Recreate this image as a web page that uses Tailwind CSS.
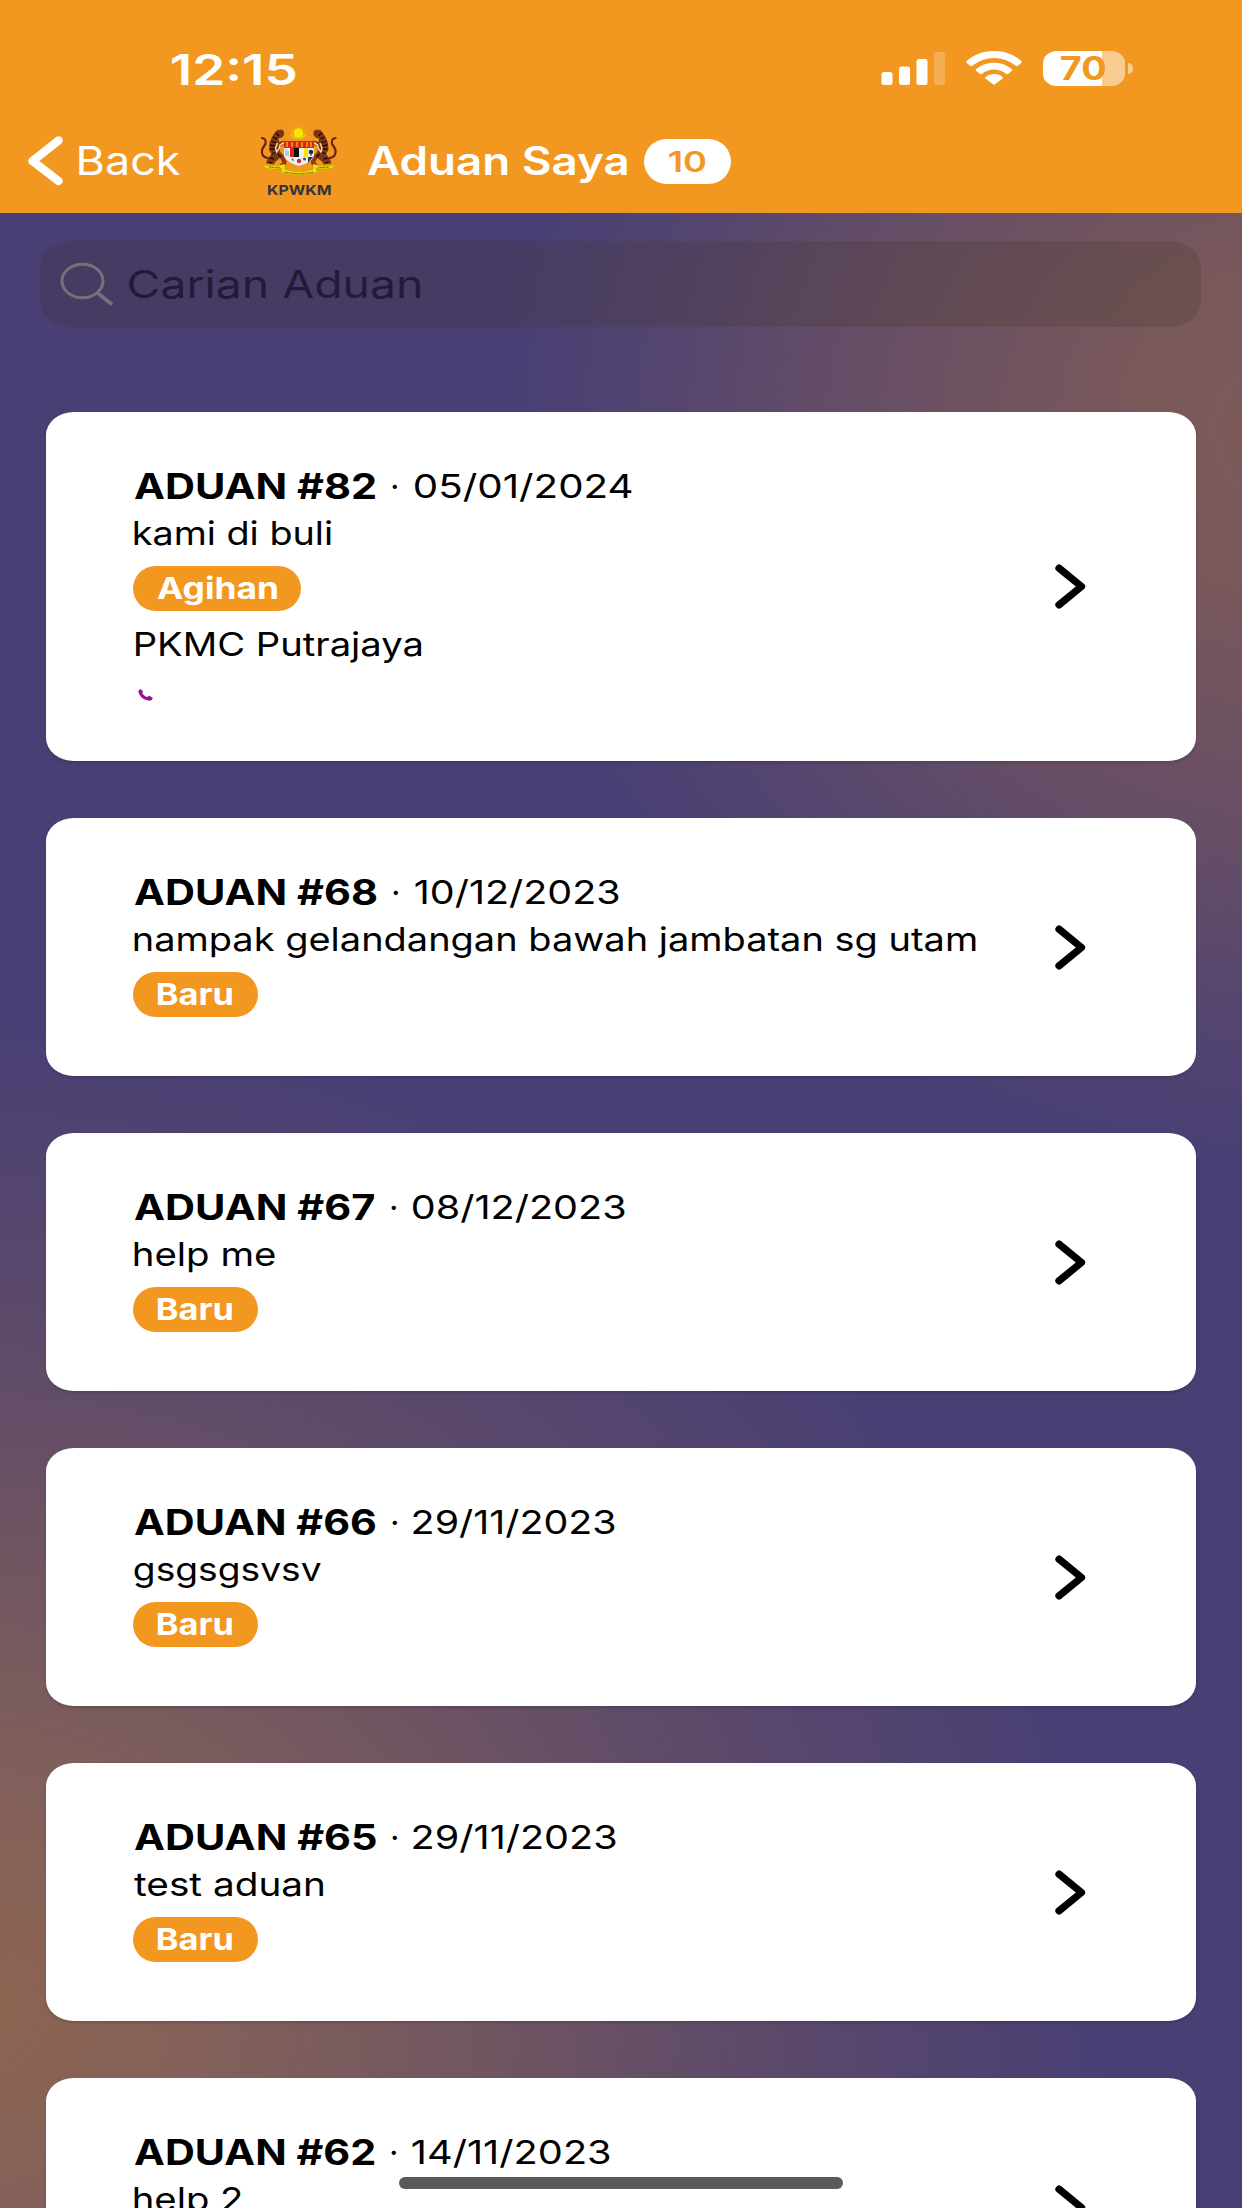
<!DOCTYPE html>
<html lang="ms">
<head>
<meta charset="utf-8">
<title>Aduan Saya</title>
<script src="https://cdn.jsdelivr.net/npm/@tailwindcss/browser@4"></script>
</head>
<body class="w-[1242px] h-[2208px] overflow-hidden relative bg-[#493f75] font-['Inter',sans-serif] text-black">
<div class="w-full h-full overflow-hidden flex flex-col bg-[radial-gradient(ellipse_800px_740px_at_1300px_430px,#7f5b59_0%,#79585b_22%,#644d66_58%,#544570_80%,#493f7500_100%),radial-gradient(ellipse_1150px_1000px_at_-30px_2010px,#8f6450_0%,#82605a_22%,#735760_42%,#5d4a6a_68%,#524470_84%,#493f7500_100%)]">

  <header class="h-[213px] shrink-0 bg-[#f29820] text-white">
    <!-- status bar -->
    <div class="h-[115px] flex items-start">
      <div class="pl-[171px] pt-[40px] w-[881px] h-full text-[42px] leading-[60px] font-semibold"><span class="fit" data-font="600 42px" data-w="125">12:15</span></div>
      <svg class="mt-[51px] w-[65px] h-[35px] shrink-0" viewBox="0 0 65 35" fill="#fff">
        <rect x="0.5" y="21" width="11" height="13" rx="2.5"/><rect x="18" y="15.500" width="11" height="18.500" rx="2.500"/>
        <rect x="35.500" y="8" width="11" height="26" rx="2.500"/><rect x="53" y="1" width="11" height="33" rx="2.500" opacity=".22"/>
      </svg>
      <svg class="ml-[20px] mt-[51px] w-[56px] h-[34px] shrink-0" viewBox="0 0 56 34" fill="#fff">
        <path d="M28 0C39 0 49 4 55.500 10.200Q56.200 11 55.500 11.700L51.500 15Q50.700 15.600 49.800 14.800Q40 7 28 7T6.200 14.800Q5.300 15.600 4.500 15L.500 11.700Q-.2 11 .5 10.200C7 4 17 0 28 0Z"/>
        <path d="M28 11.700C35 11.700 41.500 14.300 46 18.300Q46.800 19.100 46 19.800L42 23Q41.200 23.700 40.300 23Q35 18.500 28 18.500T15.700 23Q14.800 23.700 14 23L10 19.800Q9.200 19.100 10 18.300C14.500 14.300 21 11.700 28 11.700Z"/>
        <path d="M28 23C31.500 23 34.500 24.300 36.500 26Q37.300 26.700 36.500 27.400L29 33.300Q28 34 27 33.300L19.500 27.400Q18.700 26.700 19.500 26C21.500 24.300 24.500 23 28 23Z"/>
      </svg>
      <div class="ml-[21px] mt-[51px] w-[82px] h-[35px] shrink-0 rounded-[14px/12px] bg-[linear-gradient(90deg,#fff_0_58.500px,#f9cd91_58.500px)] pl-[18px] text-[#f29820] text-[32px] leading-[35px] font-bold"><span class="fit" data-font="700 32px" data-w="45">70</span></div>
      <div class="ml-[3px] mt-[63px] w-[5px] h-[11px] shrink-0 rounded-r-full bg-[#f9cd91]"></div>
    </div>
    <!-- navigation bar -->
    <div class="h-[98px] flex items-start">
      <svg class="ml-[27px] mt-[20px] w-[38px] h-[52px] shrink-0" viewBox="0 0 38 52" fill="none" stroke="#fff" stroke-width="8.500" stroke-linecap="round" stroke-linejoin="round"><path d="M31.500 5.500L5.500 26L31.500 46"/></svg>
      <div class="ml-[14px] mt-[16px] w-[181px] shrink-0 text-[39px] leading-[60px] font-normal"><span class="fit" data-font="400 39px" data-w="101">Back</span></div>
      <div class="w-[78px] mt-[10px] shrink-0 flex flex-col items-center">
        <svg class="w-[78px] h-[53px]" viewBox="0 0 78 53">
          <!-- star -->
          <circle cx="38.500" cy="8" r="4.800" fill="#fbe600"/><circle cx="38.500" cy="8" r="6.600" fill="none" stroke="#d6c400" stroke-width="1.400" stroke-dasharray="1.500 1.200"/>
          <path d="M31 10Q38 16 46 10" fill="none" stroke="#e7d320" stroke-width="1.500"/>
          <!-- tigers -->
          <g id="tiger">
            <path d="M24 6.500L21.500 4.500L17 5L14.500 8L12 12L9.500 18L9 25L11.500 29L7.500 34L6 38.500L14 39.500L15 37L20 33L22.500 37L19.500 40H26L26.500 36L24 31L20 26.500L20 22L25 18.500L24.500 15.500L19 17L18.500 13.500L22 12.500L24 10Z" fill="#7c3712"/>
            <path d="M8 33Q1 32 2 25Q3.500 21.500 5.500 19Q6.500 13.500 2 13" fill="none" stroke="#6b2110" stroke-width="2.200" stroke-linecap="round"/>
            <path d="M13 12L17 14M11 16L16 18M10 20L15 21M10 24L15 24M12 29L16 27M10 33L14 34M18 29L21 32M16 8L19 11M9 37L12 38" stroke="#190a08" stroke-width="1.300"/>
            <path d="M17.500 18L15.500 23L16.500 27L19 24L20 20L24 17.500" fill="none" stroke="#f4dc9e" stroke-width="1.500"/>
            <path d="M22 32L25 35.500L23 39" stroke="#d32a18" stroke-width="1.200" fill="none"/>
          </g>
          <use href="#tiger" transform="translate(77.500 0) scale(-1 1)"/>
          <!-- shield -->
          <path d="M24 16H54V31Q52 37 39 41Q26 37 24 31Z" fill="#eef0ee"/>
          <path d="M24 16H54V23H24Z" fill="#df2417"/>
          <path d="M27 17V22M32 17V22M37 17V22M42 17V22M47 17V22M51 17V22" stroke="#f7c81c" stroke-width="1.200"/>
          <path d="M30 23h4v9h-4z" fill="#e2261b"/><path d="M34 23h5v9h-5z" fill="#111"/><path d="M44 23h4v9h-4z" fill="#f8e40c"/>
          <path d="M26 24V31M28 26V31" stroke="#7cb4d8" stroke-width="1.200"/>
          <circle cx="51" cy="27" r="2.300" fill="#153a3a"/><path d="M51 27V31" stroke="#153a3a"/>
          <path d="M48 32H53L48 38Z" fill="#173c78"/><path d="M31 35l2-2l1 3z" fill="#2485b8"/><circle cx="39" cy="36" r="2.200" fill="#c82d3d"/><circle cx="44.500" cy="34" r="1.500" fill="#284ba0"/>
          <!-- motto ribbon -->
          <path d="M2 39.500Q12 43 25 39V44.500Q39 49 53 44.500V39Q66 43 76 39.500L72 43Q65 45 56 43L57 47.500Q39 52 21 47.500L22 43Q12 45 6 43Z" fill="#f3e209" stroke="#a99a0b" stroke-width=".4"/>
          <path d="M9 42Q15 43 20 42M58 42Q63 43 69 42M24 47Q39 50 54 47" fill="none" stroke="#554f0b" stroke-width="1" stroke-dasharray="1.500 .8"/>
        </svg>
        <div class="mt-[3px] text-[13.500px] leading-[18px] font-bold text-[#363338]"><span class="fit" data-font="700 13.5px" data-w="64">KPWKM</span></div>
      </div>
      <div class="ml-[29px] mt-[16px] shrink-0 text-[39px] leading-[60px] font-semibold"><span class="fit" data-font="600 39px" data-w="260">Aduan Saya</span></div>
      <div class="ml-[17px] mt-[24px] w-[87px] h-[45px] shrink-0 rounded-full bg-white pl-[25px] text-[28.500px] leading-[45px] font-semibold text-[#f29820]"><span class="fit" data-font="600 28.5px" data-w="37">10</span></div>
    </div>
  </header>

  <main class="flex flex-col">
    <div class="mt-[28px] ml-[40px] w-[1161px] h-[86px] rounded-[32px/26px] bg-[#3b3020]/20 flex">
      <svg class="ml-[20px] mt-[21px] w-[54px] h-[46px] shrink-0" viewBox="0 0 54 46" fill="none" stroke="#767078" stroke-width="3"><ellipse cx="22.500" cy="19" rx="20.500" ry="16.700"/><path d="M37 30.500L52 42.500" stroke-width="3.600"/></svg>
      <div class="ml-[15px] text-[38.500px] leading-[87px] text-[#221b38]"><span class="fit" data-font="400 38.5px" data-w="291">Carian Aduan</span></div>
    </div>
    <div id="list" class="mt-[85px] ml-[46px] w-[1150px] flex flex-col gap-[57px]"></div>
  </main>
</div>

<div class="absolute left-[399px] top-[2177px] w-[444px] h-[12px] rounded-full bg-[#5a5a5a]"></div>

<script>
  const items = [
    { no: 82, nw: 242, date: '05/01/2024', dw: 218, dg: 21, text: 'kami di buli', tw: 198, tag: 'Agihan', gw: 120, office: 'PKMC Putrajaya', ow: 286 },
    { no: 68, nw: 243, date: '10/12/2023', dw: 204, dg: 21, text: 'nampak gelandangan bawah jambatan sg utam', tw: 842, tag: 'Baru', gw: 75 },
    { no: 67, nw: 241, date: '08/12/2023', dw: 213, dg: 20, text: 'help me', tw: 141, tag: 'Baru', gw: 75 },
    { no: 66, nw: 242, date: '29/11/2023', dw: 202, dg: 20, text: 'gsgsgsvsv', tw: 187, tag: 'Baru', gw: 75 },
    { no: 65, nw: 242, date: '29/11/2023', dw: 203, dg: 20, text: 'test aduan', tw: 189, tag: 'Baru', gw: 75 },
    { no: 62, nw: 241, date: '14/11/2023', dw: 198, dg: 20, text: 'help 2', tw: 107, tag: 'Baru', gw: 75 },
  ];
  document.getElementById('list').innerHTML = items.map(i => `
    <article class="${i.office ? 'h-[348.500px]' : 'h-[258px]'} shrink-0 rounded-[28px/23px] bg-white shadow-[0_2px_3px_rgba(0,0,0,0.15)] flex items-center">
      <div class="pl-[88px] pt-[51px] w-[1008px] self-start">
        <div class="flex h-[47px] leading-[46px] text-[33px]">
          <span class="fit text-[35px] font-bold" data-font="700 35px" data-w="${i.nw}">ADUAN #${i.no}</span>
          <span class="fit ml-[16px]" data-font="400 33px" data-w="5">·</span>
          <span class="fit" style="margin-left:${i.dg - 4}px" data-font="400 33px" data-w="${i.dw}">${i.date}</span>
        </div>
        <div class="leading-[46px] text-[33px]"><span class="fit" data-font="400 33px" data-w="${i.tw}">${i.text}</span></div>
        <div class="mt-[10px] -ml-px h-[45px] ${i.office ? 'w-[168px]' : 'w-[125px]'} rounded-full bg-[#f29820] text-white text-[30px] leading-[45px] font-bold pl-[24px]"><span class="fit" data-font="700 30px" data-w="${i.gw}">${i.tag}</span></div>
        ${i.office ? `<div class="mt-[10px] leading-[46px] text-[33px]"><span class="fit ml-px" data-font="400 33px" data-w="${i.ow}">${i.office}</span></div>
        <svg class="mt-[22px] ml-[4px] w-[15px] h-[12px]" viewBox="0 0 15 12"><path d="M.3 2.500Q.8.300 3 .3L5 2.500L4.300 4.400Q6.500 7 9 7.900L11.300 6.800L14.700 8.800Q14.500 11.500 11.500 11.700Q2 10.500.3 2.500Z" fill="#9c0f8f"/></svg>` : ''}
      </div>
      <svg class="w-[34px] h-[46px] shrink-0" viewBox="0 0 34 46" fill="none" stroke="#000" stroke-width="7.300" stroke-linecap="round" stroke-linejoin="round"><path d="M5 5.200L27.500 23.500L5 41.800"/></svg>
    </article>`).join('');

  // Widen each label so that its ink spans the width given in data-w.
  const ctx = document.createElement('canvas').getContext('2d');
  document.querySelectorAll('.fit').forEach(el => {
    ctx.font = `${el.dataset.font} Inter, sans-serif`;
    const m = ctx.measureText(el.textContent);
    const w = +el.dataset.w;
    const s = w / (m.actualBoundingBoxLeft + m.actualBoundingBoxRight);
    Object.assign(el.style, {
      display: 'inline-block', whiteSpace: 'nowrap', flexShrink: 0, width: w + 'px', verticalAlign: 'top',
      transformOrigin: 'left', transform: `translateX(${m.actualBoundingBoxLeft * s}px) scaleX(${s})`
    });
  });
</script>
</body>
</html>
